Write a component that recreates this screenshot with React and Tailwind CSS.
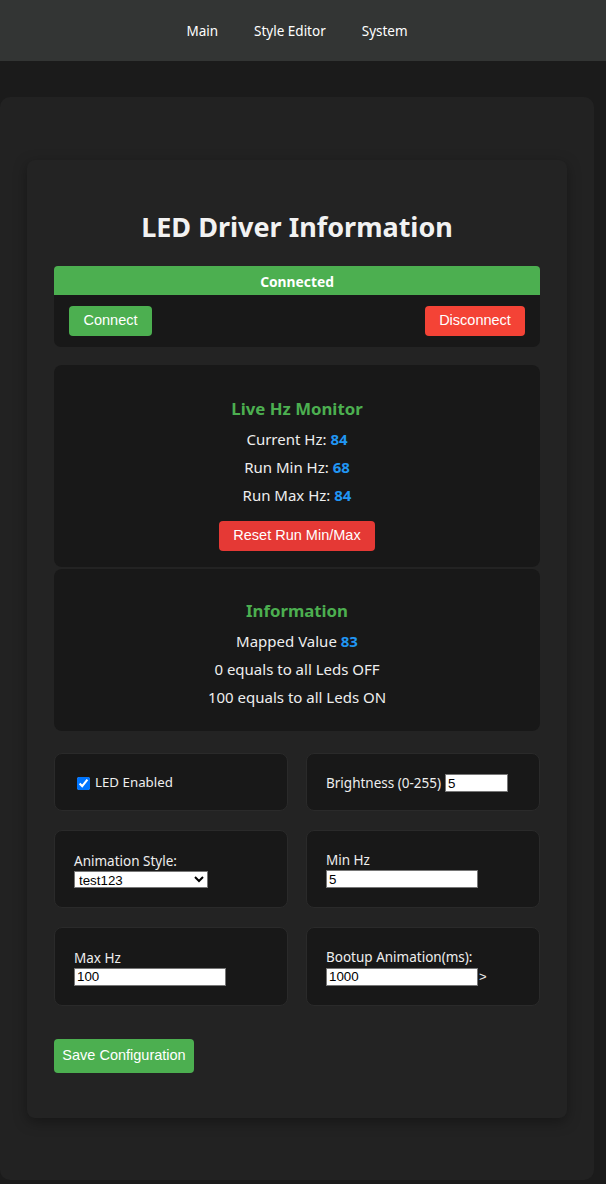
import React from "react";

const F = "font-['Noto_Sans','Open_Sans',sans-serif]";
const A = "font-['Liberation_Sans',Arial,sans-serif]";

function Card({ children, className = "" }) {
  return (
    <div className={"rounded-[8px] border border-[#2a2a2a] bg-[#181818] px-[19px] " + className}>
      {children}
    </div>
  );
}

function TextInput({ value, w }) {
  return (
    <input
      type="text"
      defaultValue={value}
      className={`${A} ${w} h-[18px] border border-[#767676] bg-white px-[2px] text-[13.33px] leading-none text-black outline-none`}
    />
  );
}

export default function App() {
  return (
    <div className={`${F} min-h-[1184px] bg-[#1b1b1b] text-[#eeeeee]`}>
      <nav className="flex h-[61px] items-center justify-center gap-[36px] bg-[#333534] pt-[2px] pr-[12px] text-[13.5px] text-white">
        <span>Main</span>
        <span>Style Editor</span>
        <span>System</span>
      </nav>
      <div className="pt-[36px] pb-[4px]">
        <div className="w-[594px] rounded-[10px] bg-[#222222] pt-[63px] pb-[62px]">
          <div className="mx-[27px] rounded-[8px] bg-[#232323] px-[27px] pt-[48px] pb-[45px] shadow-[0_4px_14px_rgba(0,0,0,0.35)]">
            <h1 className="text-center text-[27px] font-bold leading-[38px] text-[#f2f2f2]">
              LED Driver Information
            </h1>
            <div className="mt-[20px]">
              <div className="flex h-[29px] items-center justify-center rounded-t-[4px] bg-[#4caf50] pt-[3px] text-[13.8px] font-bold text-white">
                Connected
              </div>
              <div className="flex items-center justify-between rounded-b-[7px] bg-[#181818] px-[15px] py-[11px]">
                <button className={`${A} h-[30px] w-[83px] rounded-[4px] bg-[#4caf50] text-[14.5px] text-white`}>
                  Connect
                </button>
                <button className={`${A} h-[30px] w-[100px] rounded-[4px] bg-[#f44336] text-[14.5px] text-white`}>
                  Disconnect
                </button>
              </div>
            </div>

            <div className="mt-[18px] flex flex-col items-center rounded-[8px] bg-[#181818] pt-[32px] pb-[16px]">
              <div className="h-[24px] text-[16.8px] font-bold leading-[24px] text-[#4caf50]">Live Hz Monitor</div>
              <div className="mt-[4px] text-[15px] leading-[28px]">
                Current Hz: <span className="font-bold text-[#2196f3]">84</span>
              </div>
              <div className="text-[15px] leading-[28px]">
                Run Min Hz: <span className="font-bold text-[#2196f3]">68</span>
              </div>
              <div className="text-[15px] leading-[28px]">
                Run Max Hz: <span className="font-bold text-[#2196f3]">84</span>
              </div>
              <button className={`${A} mt-[12px] h-[30px] w-[156px] rounded-[4px] bg-[#e53935] text-[14.5px] text-white`}>
                Reset Run Min/Max
              </button>
            </div>

            <div className="mt-[2px] flex flex-col items-center rounded-[8px] bg-[#181818] pt-[30px] pb-[19px]">
              <div className="h-[24px] text-[16.8px] font-bold leading-[24px] text-[#4caf50]">Information</div>
              <div className="mt-[4px] text-[15px] leading-[28px]">
                Mapped Value <span className="font-bold text-[#2196f3]">83</span>
              </div>
              <div className="text-[15px] leading-[28px]">0 equals to all Leds OFF</div>
              <div className="text-[15px] leading-[29px]">100 equals to all Leds ON</div>
            </div>

            <div className="mt-[22px] grid grid-cols-2 gap-x-[18px] gap-y-[19px] text-[13.5px]">
              <Card className="flex h-[58px] items-center pt-[2px]">
                <input type="checkbox" defaultChecked className="ml-[3px] mr-[5px] h-[13px] w-[13px] accent-[#0075ff]" />
                <span className="text-[13.3px]">LED Enabled</span>
              </Card>
              <Card className="flex h-[58px] items-center pt-[2px]">
                <span className="mr-[4px]">Brightness (0-255)</span>
                <TextInput value="5" w="w-[63px]" />
              </Card>
              <Card className="flex h-[78px] flex-col justify-center">
                <div className="leading-[20px]">Animation Style:</div>
                <select
                  defaultValue="test123"
                  className={`${A} h-[17px] w-[134px] border border-[#767676] bg-white text-[13.33px] leading-none text-black`}
                >
                  <option value="test123">test123</option>
                </select>
              </Card>
              <Card className="flex h-[78px] flex-col justify-center">
                <div className="leading-[20px]">Min Hz</div>
                <TextInput value="5" w="w-[152px]" />
              </Card>
              <Card className="flex h-[79px] flex-col justify-center">
                <div className="leading-[20px]">Max Hz</div>
                <TextInput value="100" w="w-[152px]" />
              </Card>
              <Card className="flex h-[79px] flex-col justify-center">
                <div className="leading-[20px]">Bootup Animation(ms):</div>
                <div className="flex items-center">
                  <TextInput value="1000" w="w-[152px]" />
                  <span className={`${A} ml-[1px] text-[13px]`}>&gt;</span>
                </div>
              </Card>
            </div>

            <button className={`${A} mt-[33px] h-[34px] w-[140px] rounded-[4px] bg-[#4caf50] text-[14.5px] text-white`}>
              Save Configuration
            </button>
          </div>
        </div>
      </div>
    </div>
  );
}
